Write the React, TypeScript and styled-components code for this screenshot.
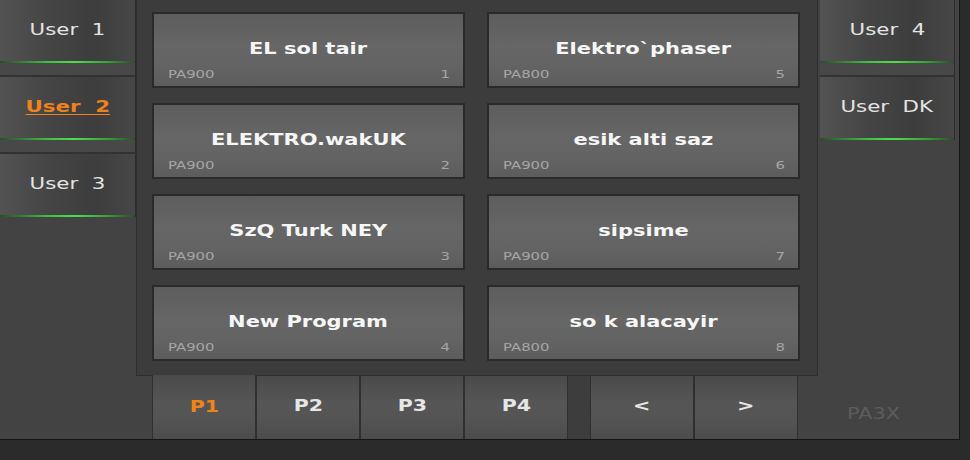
import React from "react";
import styled, { createGlobalStyle } from "styled-components";

const Global = createGlobalStyle`
  html, body { margin: 0; padding: 0; background: #2b2b2b; }
  body {
    width: 970px; height: 460px; overflow: hidden;
    font-family: "DejaVu Sans", Verdana, sans-serif;
  }
`;

const Screen = styled.div`
  width: 970px;
  height: 460px;
  background: #2b2b2b;
`;

const Main = styled.div`
  width: 959px;
  height: 439px;
  background: #434343;
  border-right: 1px solid #151515;
  border-bottom: 1px solid #151515;
  display: flex;
  flex-direction: column;
`;

const TopRow = styled.div`
  display: flex;
  height: 376px;
`;

const SideCol = styled.div<{ $right?: boolean }>`
  width: ${(p) => (p.$right ? 135 : 136)}px;
  margin-left: ${(p) => (p.$right ? 2 : 0)}px;
  display: flex;
  flex-direction: column;
`;

const UserItem = styled.div<{ $last?: boolean }>`
  box-sizing: border-box;
  height: ${(p) => (p.$last ? 63 : 77)}px;
  display: flex;
  flex-direction: column;
  background: #484848;
  border-right: 1px solid #2c2c2c;
  border-bottom: ${(p) => (p.$last ? "none" : "2px solid #323232")};
`;

const UserFace = styled.div<{ $active?: boolean }>`
  height: 61px;
  display: flex;
  align-items: center;
  justify-content: center;
  padding-bottom: 3px;
  box-sizing: border-box;
  background: linear-gradient(90deg, #535353 0%, #454545 35%, #3d3d3d 70%, #474747 100%);
  font-size: 16px;
  font-weight: ${(p) => (p.$active ? "bold" : "normal")};
  color: ${(p) => (p.$active ? "#f0821c" : "#e4e4e4")};
  text-decoration: ${(p) => (p.$active ? "underline" : "none")};
  text-underline-offset: 2px;
`;

const Glow = styled.div`
  height: 2px;
  background: linear-gradient(90deg, #2f4a2f 0%, #3fbf3f 35%, #4be04b 55%, #37a037 80%, #2f4a2f 100%);
`;

const Stretch = styled.span<{ $k?: number; $origin?: string }>`
  display: inline-block;
  white-space: pre;
  transform: scaleX(${(p) => p.$k ?? 1.32});
  transform-origin: ${(p) => p.$origin ?? "center"};
`;

const Panel = styled.div`
  box-sizing: border-box;
  width: 682px;
  height: 376px;
  background: #3c3c3c;
  border: 1px solid #2e2e2e;
  border-top: none;
  padding: 12px 17px 14px 15px;
  display: grid;
  grid-template-columns: 313px 313px;
  grid-auto-rows: 76px;
  grid-auto-flow: column;
  grid-template-rows: repeat(4, 76px);
  column-gap: 22px;
  row-gap: 15px;
`;

const Card = styled.div`
  box-sizing: border-box;
  border: 2px solid #2a2a2a;
  background: linear-gradient(180deg, #5d5d5d 0%, #666666 45%, #636363 75%, #5c5c5c 100%);
  display: flex;
  flex-direction: column;
`;

const Title = styled.div`
  margin-top: 25px;
  height: 20px;
  line-height: 20px;
  text-align: center;
  font-size: 16px;
  font-weight: bold;
  color: #f6f6f6;
`;

const Meta = styled.div`
  margin-top: 10px;
  height: 12px;
  line-height: 12px;
  display: flex;
  justify-content: space-between;
  padding: 0 13px 0 14px;
  font-size: 11px;
  color: #a6a6a6;
`;

const BottomRow = styled.div`
  display: flex;
  height: 63px;
  padding-left: 152px;
`;

const Tab = styled.div<{ $active?: boolean }>`
  box-sizing: border-box;
  width: 104px;
  height: ${(p) => (p.$active ? 64 : 63)}px;
  margin-top: ${(p) => (p.$active ? -1 : 0)}px;
  border-left: 1px solid #2f2f2f;
  border-right: 1px solid #2f2f2f;
  background: linear-gradient(180deg, #4a4a4a 0%, #565656 45%, #545454 70%, #4c4c4c 100%);
  display: flex;
  align-items: center;
  justify-content: center;
  padding-bottom: ${(p) => (p.$active ? 2 : 4)}px;
  font-size: 16px;
  font-weight: bold;
  color: ${(p) => (p.$active ? "#f08418" : "#e6e6e6")};
`;

const TabSpacer = styled.div`
  width: 22px;
  height: 63px;
  background: #3d3d3d;
`;

const Brand = styled.div`
  margin-left: 49px;
  align-self: center;
  margin-top: 11px;
  font-size: 16px;
  color: #5d5d5d;
`;

const leftUsers = ["User 1", "User 2", "User 3"];
const rightUsers = ["User 4", "User DK"];

const programs = [
  { name: "EL sol tair", src: "PA900", n: 1 },
  { name: "ELEKTRO.wakUK", src: "PA900", n: 2 },
  { name: "SzQ Turk NEY", src: "PA900", n: 3 },
  { name: "New Program", src: "PA900", n: 4 },
  { name: "Elektro`phaser", src: "PA800", n: 5 },
  { name: "esik alti saz", src: "PA900", n: 6 },
  { name: "sipsime", src: "PA900", n: 7 },
  { name: "so k alacayir", src: "PA800", n: 8 },
];

function UserList({ items, active, right }: { items: string[]; active?: string; right?: boolean }) {
  return (
    <SideCol $right={right}>
      {items.map((u, i) => (
        <UserItem key={u} $last={i === items.length - 1}>
          <UserFace $active={u === active}>
            <Stretch $k={1.33}>{u.replace(" ", "  ")}</Stretch>
          </UserFace>
          <Glow />
        </UserItem>
      ))}
    </SideCol>
  );
}

export default function App() {
  return (
    <Screen>
      <Global />
      <Main>
        <TopRow>
          <UserList items={leftUsers} active="User 2" />
          <Panel>
            {programs.map((p) => (
              <Card key={p.n}>
                <Title>
                  <Stretch $k={1.31}>{p.name}</Stretch>
                </Title>
                <Meta>
                  <Stretch $k={1.35} $origin="left">{p.src}</Stretch>
                  <Stretch $k={1.35} $origin="right">{String(p.n)}</Stretch>
                </Meta>
              </Card>
            ))}
          </Panel>
          <UserList items={rightUsers} right />
        </TopRow>
        <BottomRow>
          <Tab $active><Stretch $k={1.28}>P1</Stretch></Tab>
          <Tab><Stretch $k={1.28}>P2</Stretch></Tab>
          <Tab><Stretch $k={1.28}>P3</Stretch></Tab>
          <Tab><Stretch $k={1.28}>P4</Stretch></Tab>
          <TabSpacer />
          <Tab><Stretch $k={1.3}>&lt;</Stretch></Tab>
          <Tab><Stretch $k={1.3}>&gt;</Stretch></Tab>
          <Brand><Stretch $k={1.3} $origin="left">PA3X</Stretch></Brand>
        </BottomRow>
      </Main>
    </Screen>
  );
}
